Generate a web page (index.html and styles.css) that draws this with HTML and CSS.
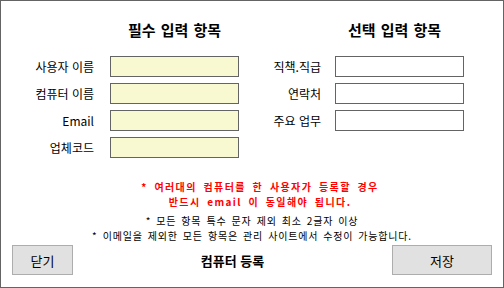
FILE: index.html
```html
<!DOCTYPE html>
<html lang="ko">
    <head>
        <meta charset="UTF-8" />
        <meta name="viewport" content="width=device-width, initial-scale=1.0" />
        <title>컴퓨터 등록</title>
        <link rel="stylesheet" href="styles.css">
    </head>
    <body>
        <div class="window">
            <!-- Input fields -->
            <div class="fields">
                <div class="group group-required">
                    <h2 class="group-title">필수 입력 항목</h2>
                    <label for="userName">사용자 이름</label>
                    <input id="userName" class="input required" type="text" />
                    <label for="pcName">컴퓨터 이름</label>
                    <input id="pcName" class="input required" type="text" />
                    <label for="email">Email</label>
                    <input id="email" class="input required" type="text" />
                    <label for="company">업체코드</label>
                    <input id="company" class="input required" type="text" />
                </div>

                <div class="group group-optional">
                    <h2 class="group-title">선택 입력 항목</h2>
                    <label for="position">직책.직급</label>
                    <input id="position" class="input" type="text" />
                    <label for="phone">연락처</label>
                    <input id="phone" class="input" type="text" />
                    <label for="duty">주요 업무</label>
                    <input id="duty" class="input" type="text" />
                </div>
            </div>

            <!-- Notices -->
            <div class="warning">
                <p>* 여러대의 컴퓨터를 한 사용자가 등록할 경우</p>
                <p>반드시 email 이 동일해야 됩니다.</p>
            </div>
            <div class="notice">
                <p>* 모든 항목 특수 문자 제외 최소 2글자 이상</p>
                <p>* 이메일을 제외한 모든 항목은 관리 사이트에서 수정이 가능합니다.</p>
            </div>

            <!-- Footer -->
            <div class="footer">
                <button class="btn btn-close">닫기</button>
                <h1 class="footer-title">컴퓨터 등록</h1>
                <button class="btn btn-save">저장</button>
            </div>
        </div>
    </body>
</html>
```

FILE: styles.css
```css
* {
    margin: 0;
    padding: 0;
    box-sizing: border-box;
    font-family: "Noto Sans CJK KR", "Liberation Sans", sans-serif;
}

body {
    background-color: #fff;
}

.window {
    width: 504px;
    height: 288px;
    border: 1px solid #646464;
    display: flex;
    flex-direction: column;
    color: #000;
}

/* Fields */
.fields {
    display: flex;
    align-items: flex-start;
    gap: 12px;
    padding-top: 19px;
}

.group {
    display: grid;
    align-content: start;
    row-gap: 6px;
    align-items: center;
}

.group-required {
    grid-template-columns: 93px 129px;
    column-gap: 16px;
}

.group-optional {
    grid-template-columns: 70px 129px;
    column-gap: 14px;
}

.group-title {
    grid-column: 2;
    text-align: center;
    font-size: 15px;
    font-weight: 700;
    line-height: 20px;
    word-spacing: 1px;
    margin-bottom: 10px;
}

.group-optional .group-title {
    padding-right: 10px;
}

.group label {
    grid-column: 1;
    text-align: right;
    font-size: 12px;
    line-height: 21px;
}

.input {
    grid-column: 2;
    height: 21px;
    border: 1px solid #646464;
    background-color: #fff;
    outline: none;
}

.input.required {
    background-color: #f8f8d1;
}

/* Notices */
.warning,
.notice {
    display: flex;
    flex-direction: column;
    align-items: center;
    font-size: 10px;
    line-height: 15px;
}

.warning p,
.notice p {
    white-space: nowrap;
}

.warning {
    margin-top: 21px;
    padding-left: 16px;
    color: #ff0000;
    font-weight: 700;
    word-spacing: 2.5px;
    letter-spacing: 1.4px;
}

.notice {
    margin-top: 4px;
    word-spacing: 1.5px;
    letter-spacing: 0.8px;
}

/* Footer */
.footer {
    margin-top: auto;
    margin-bottom: 12px;
    padding: 0 11px;
    display: flex;
    align-items: center;
}

.footer-title {
    flex: 1;
    text-align: center;
    font-size: 13px;
    font-weight: 700;
}

.btn {
    height: 30px;
    background-color: #e1e1e1;
    border: 1px solid #adadad;
    font-size: 13px;
    color: #000;
    cursor: pointer;
}

.btn-close {
    width: 61px;
}

.btn-save {
    width: 100px;
}
```
